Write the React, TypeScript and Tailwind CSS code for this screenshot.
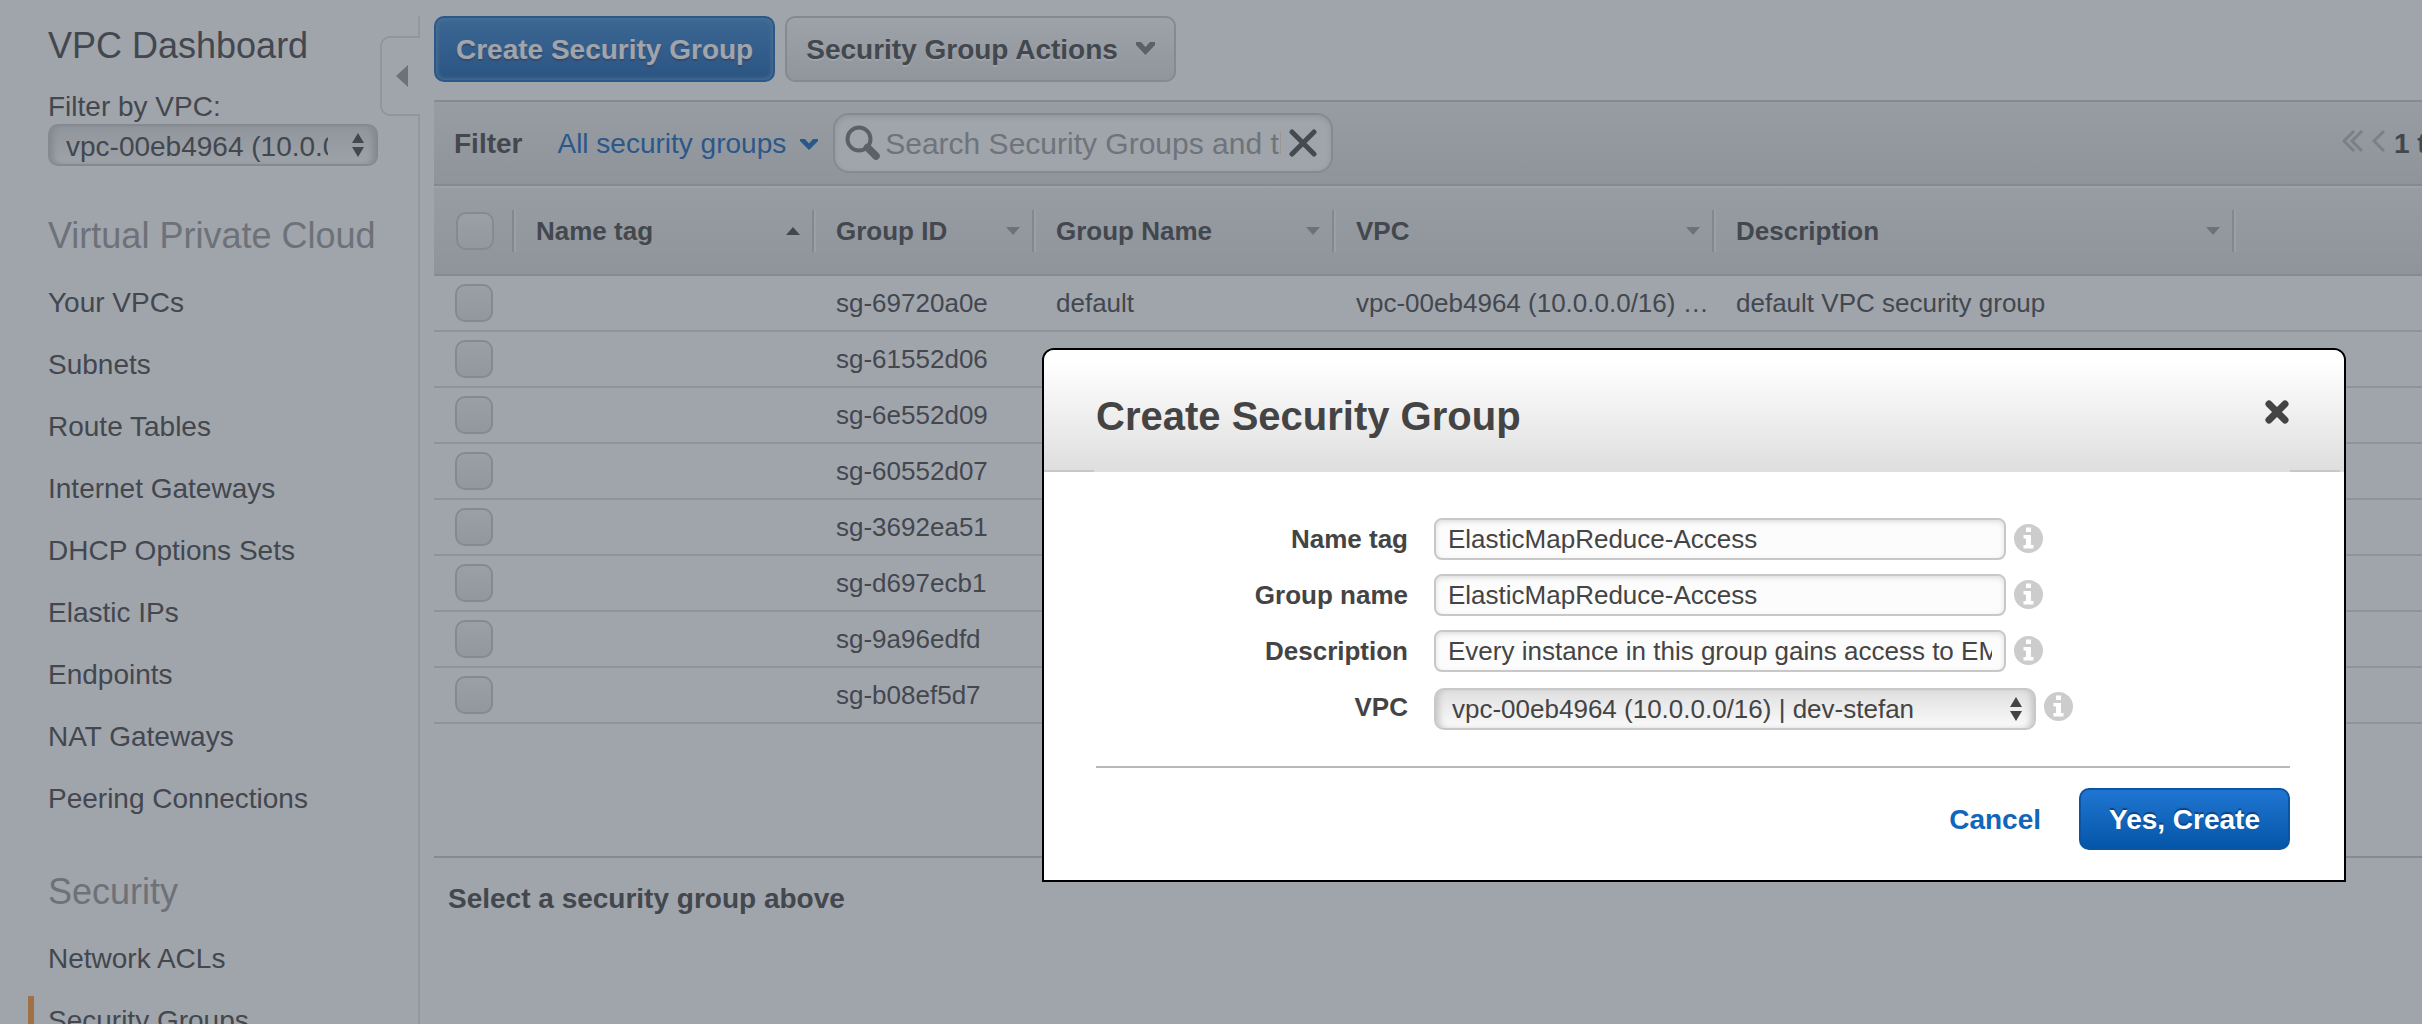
import React from "react";

const vpcLinks = [
  "Your VPCs",
  "Subnets",
  "Route Tables",
  "Internet Gateways",
  "DHCP Options Sets",
  "Elastic IPs",
  "Endpoints",
  "NAT Gateways",
  "Peering Connections",
];

const securityLinks = ["Network ACLs", "Security Groups"];

const columns = [
  { title: "Name tag", width: "w-[300px]", sorted: true },
  { title: "Group ID", width: "w-[220px]", sorted: false },
  { title: "Group Name", width: "w-[300px]", sorted: false },
  { title: "VPC", width: "w-[380px]", sorted: false },
  { title: "Description", width: "w-[520px]", sorted: false },
];

const vpcName = "vpc-00eb4964 (10.0.0.0/16) | dev-stefan";

const groups = [
  {
    id: "sg-69720a0e",
    name: "default",
    vpc: "vpc-00eb4964 (10.0.0.0/16) …",
    description: "default VPC security group",
  },
  { id: "sg-61552d06", name: "", vpc: "", description: "" },
  { id: "sg-6e552d09", name: "", vpc: "", description: "" },
  { id: "sg-60552d07", name: "", vpc: "", description: "" },
  { id: "sg-3692ea51", name: "", vpc: "", description: "" },
  { id: "sg-d697ecb1", name: "", vpc: "", description: "" },
  { id: "sg-9a96edfd", name: "", vpc: "", description: "" },
  { id: "sg-b08ef5d7", name: "", vpc: "", description: "" },
];

function SelectBox({ id, className }: { id: string; className: string }) {
  return (
    <div className={`relative ${className}`}>
      <select
        id={id}
        className="block h-[42px] w-full appearance-none rounded-[10px] border-2 border-[#c8c8c8] bg-linear-to-b from-[#e0e0e0] to-[#fafafa] pr-12 pb-[2px] pl-4 text-[#444] shadow-[inset_6px_0_6px_-3px_#c4c4c4,inset_-6px_0_6px_-3px_#c4c4c4] outline-none"
      >
        <option>{vpcName}</option>
      </select>
      <svg viewBox="0 0 12 26" className="pointer-events-none absolute right-[14px] bottom-2 h-[26px] w-3 fill-[#444]">
        <path d="M6 1l6 10H0zM6 25l6-10H0z" />
      </svg>
    </div>
  );
}

function InfoIcon() {
  return (
    <svg viewBox="0 0 29 29" className="mb-[2px] ml-2 size-[29px] shrink-0">
      <circle cx="14.500" cy="14.500" r="14.500" fill="#ccc" />
      <path
        d="M12 3.500h5v4.500h-5zM9.500 11h7.500v10h2.500v3.500h-10v-3.500h2.500v-6.500h-2.500z"
        fill="#fff"
      />
    </svg>
  );
}

function Checkbox({ label }: { label: string }) {
  return (
    <input
      type="checkbox"
      aria-label={label}
      className="block size-[38px] appearance-none rounded-[10px] border-2 border-[#c8c8c8] bg-linear-to-b from-[#f4f4f4] to-[#e4e4e4]"
    />
  );
}

function NavList({ items, active }: { items: string[]; active?: string }) {
  return (
    <ul className="flex flex-col gap-3">
      {items.map((item) => (
        <li key={item} className={item === active ? "border-l-[6px] border-[#ff9933] pl-[14px]" : "pl-5"}>
          <a href="#" className="block leading-[50px] text-[#444]">
            {item}
          </a>
        </li>
      ))}
    </ul>
  );
}

function Sidebar() {
  return (
    <aside className="relative w-[420px] shrink-0 pt-4">
      <div className="h-full border-r-2 border-[#e6e6e6] pl-7">
        <h1 className="pt-[10px] pl-5 text-4xl leading-[40px]">VPC Dashboard</h1>
        <div className="pt-[24px] pl-5">
          <label htmlFor="filter-vpc" className="block leading-[34px]">
            Filter by VPC:
          </label>
          <SelectBox id="filter-vpc" className="w-[330px]" />
        </div>
        <h2 className="pt-[50px] pb-[22px] pl-5 text-4xl leading-[40px] text-[#999]">Virtual Private Cloud</h2>
        <NavList items={vpcLinks} />
        <h2 className="pt-[48px] pb-[22px] pl-5 text-4xl leading-[40px] text-[#999]">Security</h2>
        <NavList items={securityLinks} active="Security Groups" />
      </div>
      <button
        type="button"
        aria-label="Collapse navigation"
        className="absolute top-9 right-0 flex h-20 w-10 items-center rounded-l-[10px] border-2 border-r-0 border-[#e0e0e0] bg-white pl-[14px]"
      >
        <svg viewBox="0 0 12 22" className="h-[22px] w-3 fill-[#999]">
          <path d="M12 0v22L0 11z" />
        </svg>
      </button>
    </aside>
  );
}

function Toolbar() {
  return (
    <div className="flex gap-[10px] pt-4 pb-[18px] font-bold">
      <button
        type="button"
        className="h-[66px] rounded-[10px] border-2 border-[#1166bb] bg-linear-to-b from-[#3585cf] to-[#145fae] px-5 pt-[2px] text-white shadow-[inset_0_0_4px_1px_#5c9ccc] [text-shadow:0_2px_1px_#2a4a80]"
      >
        Create Security Group
      </button>
      <button
        type="button"
        className="flex h-[66px] items-center gap-[18px] rounded-[10px] border-2 border-[#c8c8c8] bg-linear-to-b from-[#fafafa] to-[#e0e0e0] px-[19px] pt-[2px] [text-shadow:0_2px_0_#fff]"
      >
        Security Group Actions
        <svg viewBox="0 0 19 13" className="mb-1 h-[13px] w-[19px] fill-[#777]">
          <path d="M0 0h5l4.500 5L14 0h5v3l-9.500 10L0 3z" />
        </svg>
      </button>
    </div>
  );
}

function FilterBar() {
  return (
    <div className="flex h-[86px] items-center border-y-2 border-[#c8c8c8] bg-linear-to-b from-[#eee] to-[#ddd] pl-5">
      <span className="pt-[2px] font-bold">Filter</span>
      <button type="button" className="ml-[35px] flex items-center gap-[14px] pt-[2px] text-[#1166bb]">
        All security groups
        <svg viewBox="0 0 18 11" className="h-[11px] w-[18px] fill-[#1166bb]">
          <path d="M0 0h5l4 4.500L13 0h5v2L9 11 0 2z" />
        </svg>
      </button>
      <div className="ml-[15px] flex h-[60px] w-[500px] items-center rounded-[16px] border-2 border-[#c8c8c8] bg-white px-[10px] shadow-[inset_0_2px_6px_#ddd]">
        <svg viewBox="0 0 36 36" className="size-9 shrink-0 fill-none stroke-[#777]">
          <circle cx="14" cy="14" r="11.500" strokeWidth="4" />
          <path d="M22.500 22.500L31 31" strokeWidth="7.500" strokeLinecap="round" />
        </svg>
        <input
          type="text"
          aria-label="Search security groups"
          placeholder="Search Security Groups and their properties"
          className="ml-1 w-[396px] text-[30px] outline-none placeholder:text-[#9c9c9c]"
        />
        <button type="button" aria-label="Clear search" className="ml-auto pr-1">
          <svg viewBox="0 0 28 28" className="size-7 fill-none stroke-[#484848] stroke-[5]">
            <path d="M3 3l22 22M25 3L3 25" strokeLinecap="round" />
          </svg>
        </button>
      </div>
      <div className="ml-auto flex w-20 items-center whitespace-nowrap font-bold">
        <button type="button" aria-label="First page" className="shrink-0 pb-1">
          <svg viewBox="0 0 22 22" className="size-[22px] fill-none stroke-[#b4b4b4] stroke-[3]">
            <path d="M12 1L2 11l10 10M20 1L10 11l10 10" />
          </svg>
        </button>
        <button type="button" aria-label="Previous page" className="ml-2 shrink-0 pb-1">
          <svg viewBox="0 0 13 22" className="h-[22px] w-[13px] fill-none stroke-[#b4b4b4] stroke-[3]">
            <path d="M12 1L2 11l10 10" />
          </svg>
        </button>
        <span className="ml-[9px] pt-[2px]">1 to 8 of 8</span>
      </div>
    </div>
  );
}

function GroupTable() {
  return (
    <table className="w-full table-fixed border-separate border-spacing-0 text-left text-[26px]">
      <thead>
        <tr className="bg-linear-to-b from-[#eee] to-[#ddd]">
          <th className="h-[90px] w-[78px] border-t-2 border-b-2 border-t-[#f8f8f8] border-b-[#c8c8c8] pl-[22px]">
            <Checkbox label="Select all" />
          </th>
          {columns.map((col) => (
            <th key={col.title} className={`${col.width} border-t-2 border-b-2 border-t-[#f8f8f8] border-b-[#c8c8c8] p-0`}>
              <div className="flex h-[42px] items-center border-l-2 border-[#c4c4c4] shadow-[inset_2px_0_0_#f4f4f4]">
                <span className="flex-1 pl-[22px]">{col.title}</span>
                <svg
                  viewBox="0 0 14 8"
                  className={col.sorted ? "mr-3 h-2 w-[14px] fill-[#444]" : "mr-3 h-2 w-[14px] fill-[#999]"}
                >
                  <path d={col.sorted ? "M7 0l7 8H0z" : "M0 0h14L7 8z"} />
                </svg>
              </div>
            </th>
          ))}
          <th className="border-t-2 border-b-2 border-t-[#f8f8f8] border-b-[#c8c8c8] p-0">
            <div className="h-[42px] border-l-2 border-[#c4c4c4] shadow-[inset_2px_0_0_#f4f4f4]" />
          </th>
        </tr>
      </thead>
      <tbody>
        {groups.map((group) => (
          <tr key={group.id} className="[&>td]:h-14 [&>td]:border-b-2 [&>td]:border-[#ddd] [&>td]:py-0">
            <td className="pl-[21px]">
              <Checkbox label={`Select ${group.id}`} />
            </td>
            <td />
            <td className="pl-6">{group.id}</td>
            <td className="pl-6">{group.name}</td>
            <td className="pl-6 whitespace-nowrap">{group.vpc}</td>
            <td className="pl-6">{group.description}</td>
            <td />
          </tr>
        ))}
      </tbody>
    </table>
  );
}

function Field({ id, label, value }: { id: string; label: string; value: string }) {
  return (
    <div className="flex h-14 items-center">
      <label htmlFor={id} className="w-[312px] text-right font-bold">
        {label}
      </label>
      <input
        id={id}
        type="text"
        defaultValue={value}
        className="ml-[26px] h-[42px] w-[572px] rounded-lg border-2 border-[#c8c8c8] bg-[#fcfcfc] px-3 shadow-[inset_0_2px_5px_#ddd] outline-none"
      />
      <InfoIcon />
    </div>
  );
}

function CreateDialog() {
  return (
    <div
      role="dialog"
      aria-modal="true"
      aria-labelledby="dialog-title"
      className="w-[1304px] overflow-hidden rounded-t-[12px] border-2 border-black bg-white"
    >
      <header className="bg-linear-to-b from-white from-10% to-[#dedede]">
        <div className="flex h-[120px] items-center justify-between pt-1 pr-[55px] pl-[52px]">
          <h2 id="dialog-title" className="pt-2 text-[40px] font-bold">
            Create Security Group
          </h2>
          <button type="button" aria-label="Close">
            <svg viewBox="0 0 24 24" className="size-6 fill-none stroke-[#444] stroke-[7]">
              <path d="M4 4l16 16M20 4L4 20" strokeLinecap="round" />
            </svg>
          </button>
        </div>
        <div className="flex justify-between pr-1">
          <div className="h-[2px] w-[50px] bg-[#c8c8c8]" />
          <div className="h-[2px] w-[50px] bg-[#c8c8c8]" />
        </div>
      </header>
      <form className="pt-[39px] pr-[54px] pl-[52px] text-[26px]">
        <Field id="name-tag" label="Name tag" value="ElasticMapReduce-Access" />
        <Field id="group-name" label="Group name" value="ElasticMapReduce-Access" />
        <Field
          id="description"
          label="Description"
          value="Every instance in this group gains access to EMR"
        />
        <div className="flex h-14 items-center">
          <label htmlFor="vpc" className="w-[312px] text-right font-bold">
            VPC
          </label>
          <SelectBox id="vpc" className="ml-[26px] w-[602px] pt-1" />
          <InfoIcon />
        </div>
        <div className="mt-[31px] flex items-center justify-end gap-[38px] border-t-2 border-[#b8b8b8] pt-5 pb-[30px] text-[28px] font-bold">
          <a href="#" className="pt-[2px] text-[#1166bb]">
            Cancel
          </a>
          <button
            type="button"
            className="h-[62px] w-[211px] rounded-[10px] border-2 border-[#0a55a4] bg-linear-to-b from-[#1f76d2] to-[#0456a8] pt-[2px] text-white [text-shadow:0_-2px_1px_#0a4484]"
          >
            Yes, Create
          </button>
        </div>
      </form>
    </div>
  );
}

export default function App() {
  return (
    <div className="relative h-screen overflow-hidden bg-white font-['Liberation_Sans',Arial,sans-serif] text-[28px] text-[#444]">
      <div className="flex min-h-full">
        <Sidebar />
        <main className="min-w-0 flex-1 pl-[14px]">
          <Toolbar />
          <FilterBar />
          <GroupTable />
          <section className="mt-[132px] border-t-2 border-[#c8c8c8] px-[14px] py-5">
            <p className="font-bold">Select a security group above</p>
          </section>
        </main>
      </div>
      <div className="absolute inset-0 flex items-start justify-end bg-[#414957]/50 pt-[348px] pr-[76px]">
        <CreateDialog />
      </div>
    </div>
  );
}
